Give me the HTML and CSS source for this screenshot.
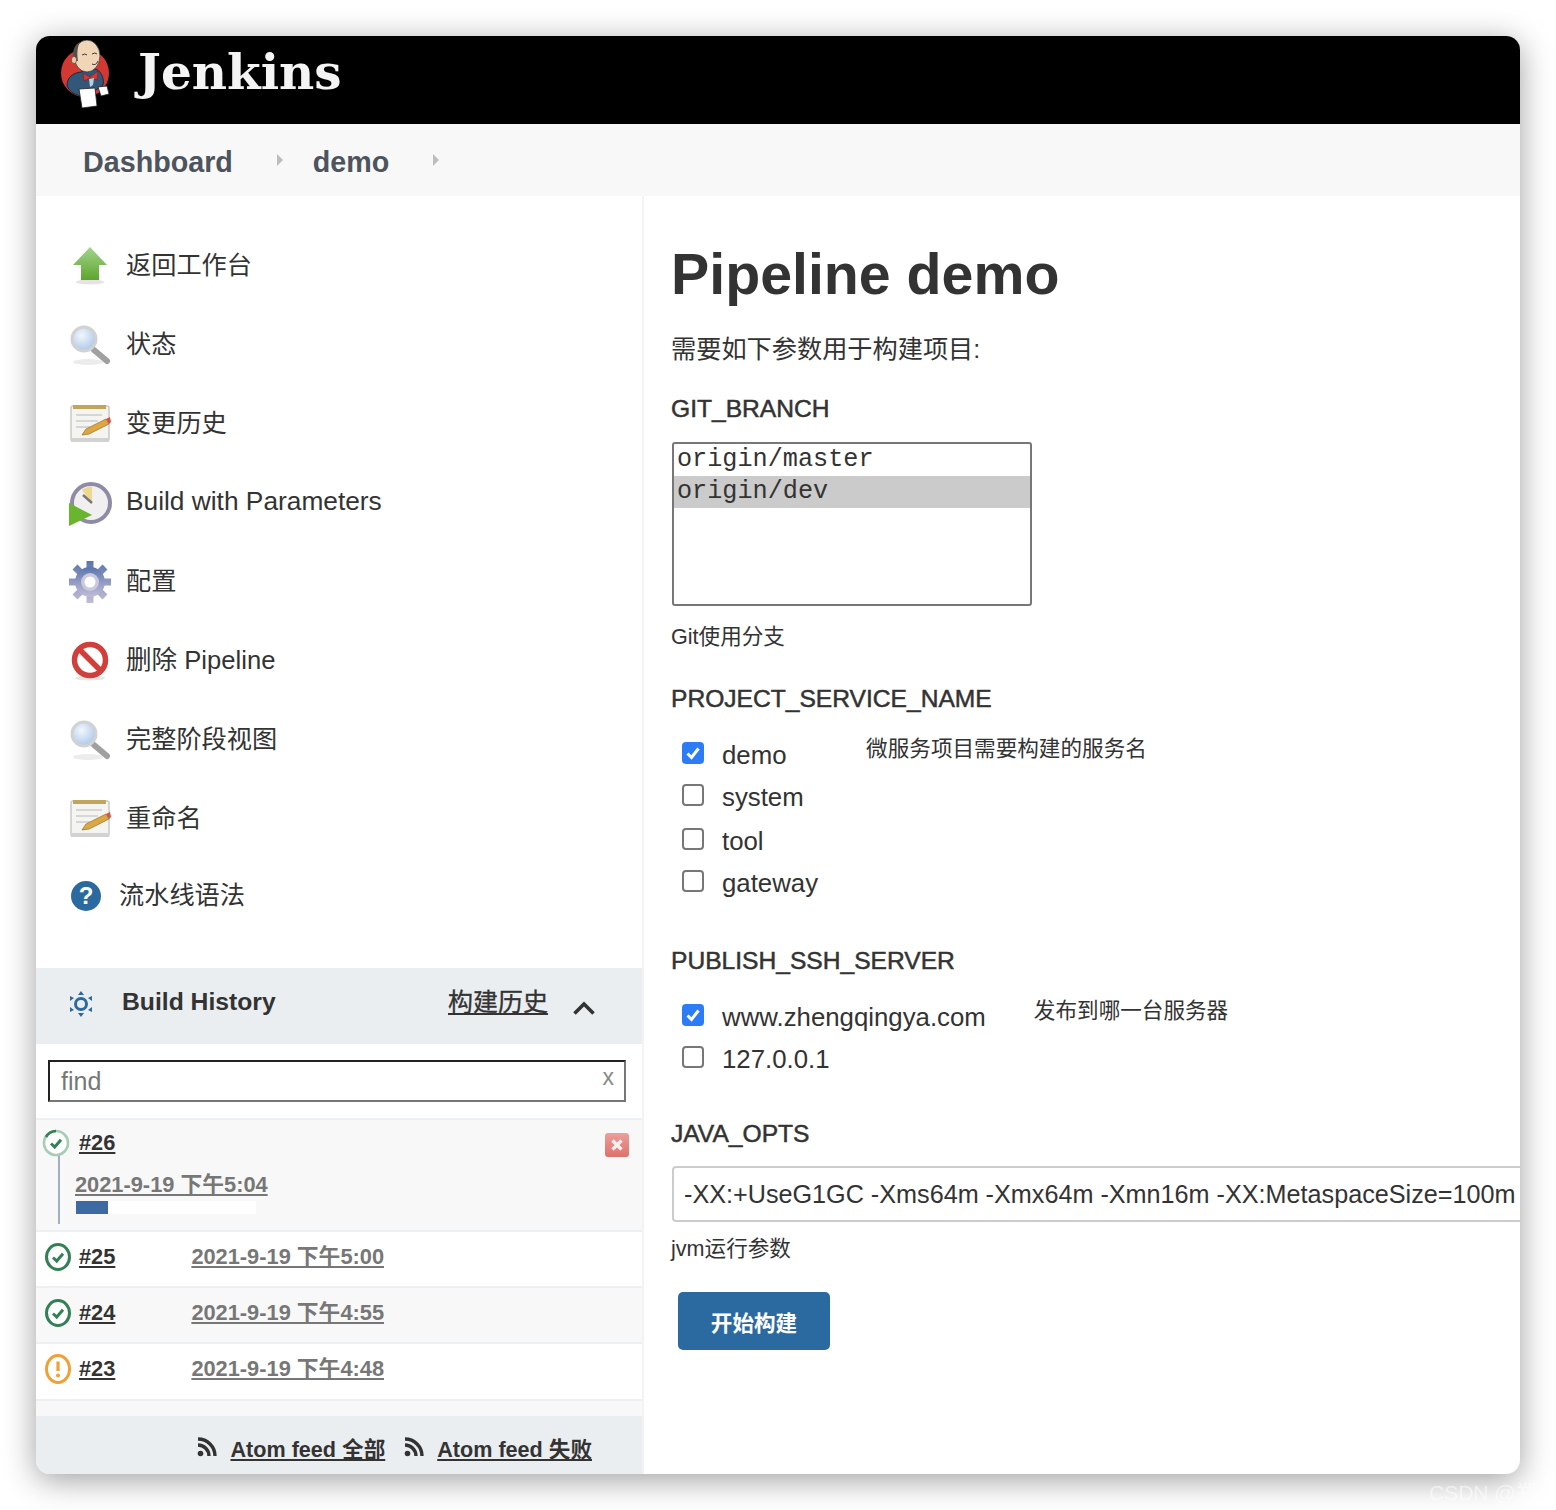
FILE: index.html
```html
<!DOCTYPE html>
<html lang="zh-CN">
<head>
    <meta charset="UTF-8">
    <title>demo [Jenkins]</title>
    <link rel="stylesheet" href="styles.css">
</head>
<body>
    <svg class="defs" width="0" height="0">
        <defs>
            <linearGradient id="g-arrow" x1="0" y1="0" x2="0" y2="1"><stop offset="0" stop-color="#a4d48e"/><stop offset="1" stop-color="#5da52c"/></linearGradient>
            <radialGradient id="g-lens" cx=".4" cy=".35" r=".7"><stop offset="0" stop-color="#f2f7fd"/><stop offset="1" stop-color="#a9c6e8"/></radialGradient>
            <linearGradient id="g-gear" x1="0" y1="0" x2="0" y2="1"><stop offset="0" stop-color="#5a75ac"/><stop offset=".55" stop-color="#979dc6"/><stop offset="1" stop-color="#c0bed6"/></linearGradient>
            <symbol id="i-search" viewBox="0 0 44 44">
                <ellipse cx="20" cy="39" rx="15" ry="3" fill="#ececec"/>
                <path d="M26 27 L39 38" stroke="#a0a0a0" stroke-width="6" stroke-linecap="round"/>
                <circle cx="16" cy="16" r="12" fill="url(#g-lens)" stroke="#d2d2d2" stroke-width="3"/>
            </symbol>
            <symbol id="i-note" viewBox="0 0 44 44">
                <rect x="3" y="4" width="38" height="35" rx="2" fill="#f4f4f0" stroke="#c9c9c9" stroke-width="1.5"/>
                <rect x="3" y="36" width="38" height="4" fill="#d2d2d2"/>
                <rect x="5" y="3" width="33" height="4" fill="#c0a55c"/>
                <path d="M8 13 H34 M8 19 H30 M8 25 H22" stroke="#d6d6d6" stroke-width="2"/>
                <path d="M14 33 L18 27 L38 17 L41 22 L21 32 Z" fill="#dca845" stroke="#a8752a" stroke-width=".8"/>
                <path d="M38 17 L42 15 L43 20 L41 22 Z" fill="#d9534a"/>
            </symbol>
            <symbol id="i-rss" viewBox="0 0 20 20">
                <circle cx="3.5" cy="16.5" r="2.8" fill="#333"/>
                <path d="M1 8 A11 11 0 0 1 12 19 M1 2 A17 17 0 0 1 18 19" fill="none" stroke="#333" stroke-width="3.4"/>
            </symbol>
            <symbol id="i-ok" viewBox="0 0 26 28">
                <ellipse cx="13" cy="14" rx="11.5" ry="12.5" fill="#fff" stroke="#338055" stroke-width="3"/>
                <path d="M8 14.5 L11.7 18 L18 10.8" fill="none" stroke="#338055" stroke-width="3"/>
            </symbol>
        </defs>
    </svg>

    <div class="window">
        <header class="top-bar">
            <svg class="logo" width="52" height="70" viewBox="0 0 52 70">
                <circle cx="25" cy="33" r="24" fill="#d33833"/>
                <path d="M7 46 C7 37 13 33 21 32 L36 29 C43 33 44 40 43 45 L36 50 L22 56 C15 55 10 52 7 46 Z" fill="#335779" stroke="#1d2b3a"/>
                <ellipse cx="27" cy="16" rx="13" ry="16" fill="#f0d6b7" stroke="#3a3a3a" stroke-width=".8"/>
                <path d="M14 21 C11 12 15 4 20 2 C17 8 17 14 18 21 Z" fill="#55504c"/>
                <ellipse cx="14" cy="20" rx="2.6" ry="3.6" fill="#eac9a6" stroke="#3a3a3a" stroke-width=".6"/>
                <path d="M22 15 Q25 13 27 15 M32 14 Q35 12 37 14 M32 24 Q36 26 38 21" fill="none" stroke="#3a3a3a" stroke-width="1"/>
                <path d="M23 33 L30 37 L38 31 L37 40 L30 38 L24 41 Z" fill="#d33833" stroke="#7a1f1c" stroke-width=".6"/>
                <path d="M29 39 L34 38 L33 45 L30 47 Z" fill="#b8cfe0"/>
                <path d="M19 49 L35 48 L37 66 L22 68 Z" fill="#fff" stroke="#222" stroke-width=".8"/>
                <path d="M38 47 L47 46 L49 54 L41 56 Z" fill="#fff" stroke="#222" stroke-width=".8"/>
            </svg>
            <span class="brand">Jenkins</span>
        </header>

        <nav class="crumbs">
            <a>Dashboard</a><i class="crumb-arrow"></i>
            <a>demo</a><i class="crumb-arrow"></i>
        </nav>

        <div class="page">
            <aside class="side">
                <ul class="tasks">
                    <li class="task">
                        <span class="task-icon">
                            <svg width="44" height="44" viewBox="0 0 44 44">
                                <ellipse cx="22" cy="38" rx="14" ry="2.5" fill="#e4e4e4"/>
                                <path d="M22 3 L39 21 H31 V36 H13 V21 H5 Z" fill="url(#g-arrow)"/>
                            </svg>
                        </span>返回工作台
                    </li>
                    <li class="task"><span class="task-icon"><svg width="44" height="44"><use href="#i-search"/></svg></span>状态</li>
                    <li class="task"><span class="task-icon"><svg width="44" height="44"><use href="#i-note"/></svg></span>变更历史</li>
                    <li class="task task-latin">
                        <span class="task-icon">
                            <svg width="44" height="44" viewBox="0 0 44 44">
                                <circle cx="23" cy="21" r="19" fill="#f1eff0" stroke="#8f8aa5" stroke-width="4"/>
                                <path d="M24 21 L14 8 Q20 4 24 5 Z" fill="#ecd98b"/>
                                <path d="M24 21 L15 13" stroke="#777" stroke-width="2.5"/>
                                <path d="M1 21 L24 33 L1 44 Z" fill="#6ab52e"/>
                            </svg>
                        </span>Build with Parameters
                    </li>
                    <li class="task">
                        <span class="task-icon">
                            <svg width="44" height="44" viewBox="0 0 44 44">
                                <path d="M22 1 V43 M1 22 H43 M7 7 L37 37 M37 7 L7 37" stroke="url(#g-gear)" stroke-width="7" fill="none"/>
                                <circle cx="22" cy="22" r="15" fill="url(#g-gear)"/>
                                <circle cx="22" cy="22" r="9" fill="#c9cae0"/>
                                <circle cx="22" cy="22" r="5.5" fill="#fff"/>
                            </svg>
                        </span>配置
                    </li>
                    <li class="task task-mixed">
                        <span class="task-icon">
                            <svg width="44" height="44" viewBox="0 0 44 44">
                                <ellipse cx="22" cy="39" rx="15" ry="2.5" fill="#e6e6e6"/>
                                <circle cx="22" cy="21" r="15.5" fill="#fff" stroke="#cf3f3c" stroke-width="5.5"/>
                                <path d="M11 10 L33 32" stroke="#cf3f3c" stroke-width="5.5"/>
                            </svg>
                        </span>删除 Pipeline
                    </li>
                    <li class="task"><span class="task-icon"><svg width="44" height="44"><use href="#i-search"/></svg></span>完整阶段视图</li>
                    <li class="task"><span class="task-icon"><svg width="44" height="44"><use href="#i-note"/></svg></span>重命名</li>
                    <li class="task task-help"><span class="help-dot">?</span>流水线语法</li>
                </ul>

                <section class="history">
                    <div class="history-head">
                        <svg class="sun" width="26" height="28" viewBox="0 0 26 28">
                            <circle cx="13" cy="14" r="5.5" fill="none" stroke="#2b6aa0" stroke-width="3"/>
                            <path d="M13 1 L16 5 H10 Z M13 27 L10 23 H16 Z M2 6 L6 8 L2 11 Z M24 6 L24 11 L20 8 Z M2 22 L2 17 L6 20 Z M24 22 L20 20 L24 17 Z" fill="#2b6aa0"/>
                        </svg>
                        <b class="history-title">Build History</b>
                        <a class="history-link">构建历史</a>
                        <svg class="chevron" width="24" height="16" viewBox="0 0 24 16">
                            <path d="M2.5 13.5 L12 4 L21.5 13.5" fill="none" stroke="#333" stroke-width="3.6"/>
                        </svg>
                    </div>

                    <div class="find-row">
                        <input class="find" type="text" placeholder="find">
                        <span class="find-x">x</span>
                    </div>

                    <div class="build build-running">
                        <div class="build-top">
                            <svg width="28" height="28" viewBox="0 0 28 28">
                                <circle cx="14" cy="14" r="12" fill="#fff" stroke="#a6cdb4" stroke-width="2.6"/>
                                <path d="M4 8 A12 12 0 0 1 14 2" fill="none" stroke="#338055" stroke-width="2.6"/>
                                <path d="M9 14.5 L12.7 18 L19 10.8" fill="none" stroke="#338055" stroke-width="3"/>
                            </svg>
                            <a class="build-no">#26</a>
                            <span class="stop">
                                <svg width="24" height="24" viewBox="0 0 24 24">
                                    <path d="M7.5 7.5 L16.5 16.5 M16.5 7.5 L7.5 16.5" stroke="#fbeeee" stroke-width="3.4"/>
                                </svg>
                            </span>
                        </div>
                        <a class="build-date build-date-under">2021-9-19 下午5:04</a>
                        <div class="progress"><div class="progress-bar" style="width: 18%"></div></div>
                    </div>

                    <div class="build">
                        <svg width="26" height="28"><use href="#i-ok"/></svg>
                        <a class="build-no">#25</a>
                        <a class="build-date">2021-9-19 下午5:00</a>
                    </div>
                    <div class="build build-alt">
                        <svg width="26" height="28"><use href="#i-ok"/></svg>
                        <a class="build-no">#24</a>
                        <a class="build-date">2021-9-19 下午4:55</a>
                    </div>
                    <div class="build build-last">
                        <svg width="26" height="30" viewBox="0 0 26 30">
                            <ellipse cx="13" cy="15" rx="11.5" ry="13.5" fill="#fff" stroke="#f0a035" stroke-width="3"/>
                            <path d="M13 7.5 V17" stroke="#f0a035" stroke-width="3.2"/>
                            <circle cx="13" cy="21.5" r="2" fill="#f0a035"/>
                        </svg>
                        <a class="build-no">#23</a>
                        <a class="build-date">2021-9-19 下午4:48</a>
                    </div>
                    <div class="build-rest"></div>

                    <div class="feeds">
                        <svg width="20" height="20"><use href="#i-rss"/></svg><a>Atom feed 全部</a>
                        <svg class="feed-gap" width="20" height="20"><use href="#i-rss"/></svg><a>Atom feed 失败</a>
                    </div>
                </section>
            </aside>

            <main class="main">
                <h1>Pipeline demo</h1>
                <p class="intro">需要如下参数用于构建项目:</p>

                <h2 class="param">GIT_BRANCH</h2>
                <div class="listbox">
                    <div class="opt">origin/master</div>
                    <div class="opt opt-on">origin/dev</div>
                </div>
                <p class="note">Git使用分支</p>

                <h2 class="param param-service">PROJECT_SERVICE_NAME</h2>
                <div class="choices">
                    <div class="choice-list">
                        <label class="choice">
                            <span class="box box-on"><svg width="22" height="22" viewBox="0 0 22 22"><path d="M5.5 11.5 L9.5 15.5 L16.5 6.5" fill="none" stroke="#fff" stroke-width="3"/></svg></span>
                            <span class="choice-text">demo</span>
                        </label>
                        <label class="choice choice-wide"><span class="box"></span><span class="choice-text">system</span></label>
                        <label class="choice"><span class="box"></span><span class="choice-text">tool</span></label>
                        <label class="choice"><span class="box"></span><span class="choice-text">gateway</span></label>
                    </div>
                    <p class="choice-note">微服务项目需要构建的服务名</p>
                </div>

                <h2 class="param param-ssh">PUBLISH_SSH_SERVER</h2>
                <div class="choices">
                    <div class="choice-list">
                        <label class="choice">
                            <span class="box box-on"><svg width="22" height="22" viewBox="0 0 22 22"><path d="M5.5 11.5 L9.5 15.5 L16.5 6.5" fill="none" stroke="#fff" stroke-width="3"/></svg></span>
                            <span class="choice-text">www.zhengqingya.com</span>
                        </label>
                        <label class="choice"><span class="box"></span><span class="choice-text">127.0.0.1</span></label>
                    </div>
                    <p class="choice-note">发布到哪一台服务器</p>
                </div>

                <h2 class="param param-java">JAVA_OPTS</h2>
                <input class="opts" type="text" value="-XX:+UseG1GC -Xms64m -Xmx64m -Xmn16m -XX:MetaspaceSize=100m" readonly>
                <p class="note note-java">jvm运行参数</p>
                <button class="build-btn">开始构建</button>
            </main>
        </div>
    </div>
    <span class="watermark">CSDN @郑清</span>
</body>
</html>
```

FILE: styles.css
```css
* {
    box-sizing: border-box;
}
html, body {
    margin: 0;
    padding: 0;
}
body {
    height: 1510px;
    padding: 36px;
    background: #fff;
    font-family: "Liberation Sans", "Noto Sans CJK SC", sans-serif;
    color: #333;
    overflow: hidden;
}
.defs {
    position: absolute;
}
.window {
    height: 1438px;
    background: #fff;
    border-radius: 14px;
    box-shadow: 0 6px 32px rgba(0, 0, 0, 0.38);
    overflow: hidden;
}
.top-bar {
    height: 88px;
    background: #000;
    display: flex;
    padding: 4px 0 0 24px;
}
.logo {
    flex: none;
}
.brand {
    margin: 6px 0 0 26px;
    font-family: "DejaVu Serif", serif;
    font-weight: bold;
    font-size: 48.5px;
    line-height: 52px;
    color: #f4f4f4;
}
.crumbs {
    height: 72px;
    background: #f8f8f8;
    display: flex;
    align-items: center;
    padding: 4px 0 0 47px;
    font-size: 28.7px;
    font-weight: bold;
    color: #4d545d;
}
.crumb-arrow {
    width: 0;
    height: 0;
    margin: -4px 30px 0 44px;
    border-left: 6px solid #bdbdbd;
    border-top: 6px solid transparent;
    border-bottom: 6px solid transparent;
}
.page {
    display: flex;
    height: 1278px;
}
.side {
    flex: none;
    width: 608px;
    border-right: 2px solid #f3f3f3;
    display: flex;
    flex-direction: column;
}
.tasks {
    list-style: none;
    margin: 0;
    padding: 27px 0 0 32px;
    height: 772px;
}
.task {
    height: 79px;
    display: flex;
    align-items: center;
    font-size: 25.2px;
}
.task-latin {
    padding-top: 3px;
    font-size: 26.3px;
}
.task-mixed {
    font-size: 25.6px;
}
.task-icon {
    width: 44px;
    height: 44px;
    margin: 6px 14px 0 0;
    display: flex;
}
.task-help {
    height: 76px;
    padding-left: 3px;
}
.help-dot {
    width: 30px;
    height: 30px;
    margin: 5px 18px 0 0;
    border-radius: 50%;
    background: #2b6aa0;
    color: #fff;
    font-weight: bold;
    font-size: 24px;
    line-height: 30px;
    text-align: center;
}
.history {
    flex: 1;
    display: flex;
    flex-direction: column;
}
.history-head {
    height: 76px;
    background: #ebeef1;
    display: flex;
    align-items: center;
    padding: 0 0 4px 32px;
}
.sun {
    margin: 0 28px 0 0;
}
.history-title {
    margin-bottom: 4px;
    font-size: 24.7px;
}
.history-link {
    margin: 0 0 8px auto;
    font-size: 25px;
    text-decoration: underline;
    -webkit-text-stroke: 0.3px #333;
}
.chevron {
    margin: 8px 46px 0 24px;
}
.find-row {
    position: relative;
    padding: 16px 16px 16px 12px;
}
.find {
    display: block;
    width: 100%;
    height: 42px;
    padding: 2px 11px;
    border: 2px solid;
    border-color: #222 #777 #777 #222;
    font: 25px "Liberation Sans", sans-serif;
    outline: none;
}
.find::placeholder {
    color: #777;
}
.find-x {
    position: absolute;
    right: 28px;
    top: 20px;
    font-size: 23px;
    color: #8a8a8a;
}
.build {
    height: 56px;
    border-top: 2px solid #ecf0f3;
    display: flex;
    align-items: center;
    padding: 0 0 4px 9px;
    font-size: 21.8px;
    line-height: 28px;
    font-weight: bold;
}
.build-alt {
    background: #f8f8f8;
}
.build-last {
    height: 57px;
    padding-bottom: 6px;
}
.build-no {
    margin-left: 8px;
    color: #333;
    text-decoration: underline;
}
.build-date {
    margin-left: 76px;
    color: #777;
    text-decoration: underline;
}
.build-running {
    position: relative;
    display: block;
    height: 112px;
    background: #f8f8f8;
    padding: 9px 13px 0 6px;
}
.build-running::before {
    content: "";
    position: absolute;
    left: 22px;
    top: 36px;
    width: 2px;
    height: 68px;
    background: #9fb0bf;
}
.build-top {
    display: flex;
    align-items: center;
}
.build-top .build-no {
    margin-left: 9px;
}
.stop {
    width: 24px;
    height: 24px;
    margin: 4px 0 0 auto;
    border-radius: 3px;
    background: linear-gradient(#ec9f9b, #dd716c);
}
.build-date-under {
    display: block;
    margin: 14px 0 0 33px;
}
.progress {
    width: 180px;
    height: 13px;
    margin: 2px 0 0 34px;
    background: #fff;
}
.progress-bar {
    height: 100%;
    background: #3d6aa3;
}
.build-rest {
    height: 17px;
    border-top: 2px solid #ecf0f3;
    background: #f8f8f8;
}
.feeds {
    flex: 1;
    background: #ebeef1;
    display: flex;
    align-items: center;
    justify-content: flex-end;
    gap: 13px;
    padding: 4px 50px 0 0;
    font-size: 21.6px;
    font-weight: bold;
}
.feeds a {
    text-decoration: underline;
}
.feed-gap {
    margin-left: 6px;
}
.main {
    flex: 1;
    padding: 0 0 0 27px;
    min-width: 0;
}
.main h1 {
    margin: 42px 0 0;
    font-size: 57.3px;
    line-height: 72px;
}
.intro {
    margin: 21px 0 0;
    font-size: 25.2px;
    line-height: 36px;
}
.param {
    margin: 25px 0 0;
    font-size: 24.6px;
    line-height: 34px;
    font-weight: normal;
    -webkit-text-stroke: 0.5px #333;
}
.listbox {
    width: 360px;
    height: 164px;
    margin: 16px 0 0 1px;
    border: 2px solid #777;
    border-radius: 3px;
    font: 25.2px "Liberation Mono", monospace;
}
.opt {
    height: 32px;
    line-height: 32px;
    padding-left: 3px;
}
.opt-on {
    background: #cbcbcb;
}
.note {
    margin: 17px 0 0;
    font-size: 21.6px;
    line-height: 28px;
}
.param-service {
    margin-top: 31px;
}
.choices {
    display: flex;
    gap: 48px;
    margin-top: 26px;
}
.choice-list {
    padding-left: 11px;
}
.choice {
    display: flex;
    height: 42px;
    font-size: 25.8px;
}
.choice-wide {
    height: 44px;
}
.box {
    flex: none;
    width: 22px;
    height: 22px;
    margin-right: 18px;
    border: 2px solid #777;
    border-radius: 4px;
    background: #fff;
}
.box-on {
    border: 0;
    background: #2b7cf6;
}
.box-on svg {
    display: block;
}
.choice-text {
    margin-top: -1px;
    line-height: 28px;
}
.choice-note {
    margin: -7px 0 0;
    font-size: 21.6px;
    line-height: 28px;
    white-space: nowrap;
}
.param-ssh {
    margin-top: 32px;
}
.param-java {
    margin-top: 29px;
}
.opts {
    display: block;
    width: 900px;
    height: 56px;
    margin: 15px 0 0 1px;
    padding: 0 10px;
    border: 2px solid #ccc;
    border-radius: 4px;
    font: 25.2px "Liberation Sans", sans-serif;
    color: #333;
    outline: none;
}
.note-java {
    margin-top: 13px;
}
.build-btn {
    display: block;
    width: 152px;
    height: 58px;
    margin: 29px 0 0 7px;
    border: 0;
    border-radius: 5px;
    background: #2b6aa0;
    color: #fff;
    font: bold 21.6px "Liberation Sans", "Noto Sans CJK SC", sans-serif;
}
.watermark {
    position: absolute;
    left: 1429px;
    top: 1476px;
    font-size: 21px;
    color: rgba(255, 255, 255, 0.55);
    white-space: nowrap;
}
```
